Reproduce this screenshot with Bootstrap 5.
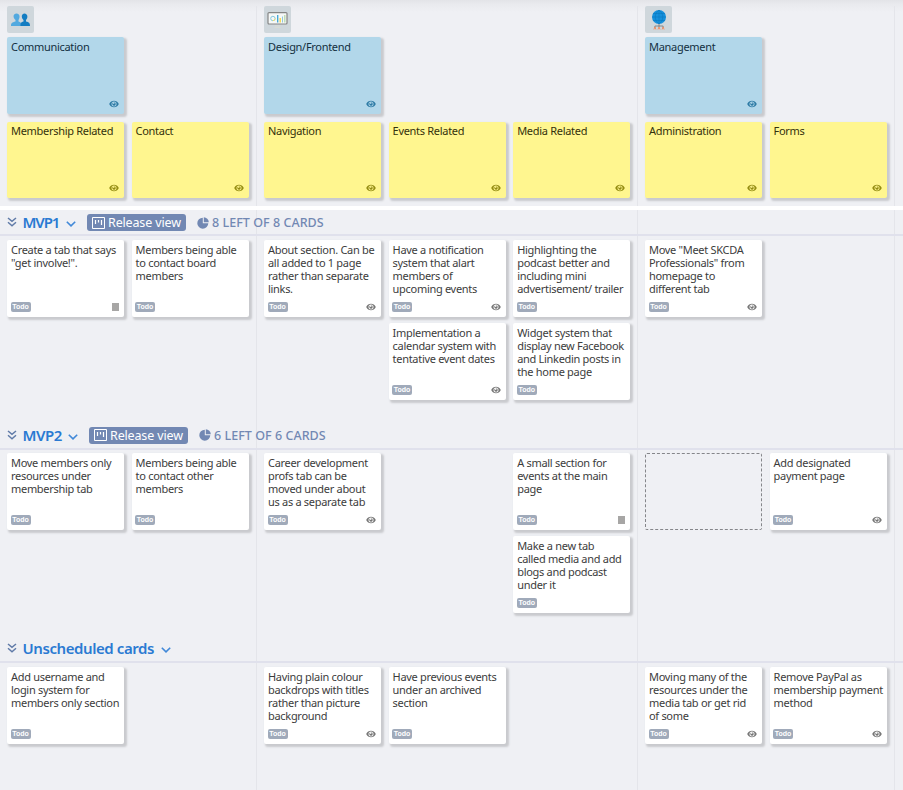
<!DOCTYPE html>
<html lang="en">
<head>
<meta charset="utf-8">
<meta name="viewport" content="width=device-width, initial-scale=1">
<title>Story map</title>
<link rel="stylesheet" href="https://cdn.jsdelivr.net/npm/bootstrap@5.3.0/dist/css/bootstrap.min.css">
<style>
body{background:#eff0f4;font-family:"Noto Sans",sans-serif;overflow:hidden}
.board{width:903px;height:790px;background:
 linear-gradient(#e4e5ea,#e4e5ea) 256px 6px/1px 100% no-repeat,
 linear-gradient(#e4e5ea,#e4e5ea) 637px 6px/1px 100% no-repeat,
 linear-gradient(#e4e5ea,#e4e5ea) 894px 6px/1px 100% no-repeat,
 linear-gradient(#e3e4e8 0,#e9eaee 4px,#eff0f4 12px) 0 0/100% 12px no-repeat}
.lane{padding-left:7px;display:grid;grid-auto-rows:77px;grid-auto-columns:117px;column-gap:7.6px;row-gap:6px;align-content:start}
.lane-2{width:257px;grid-template-columns:117px 117px}
.lane-3{width:381px;grid-template-columns:117px 117px 117px}
.map-head{height:206px;padding-top:6px}
.persona{width:27px;height:27px;background:#cfd7dc;border-radius:2px;margin-bottom:4px}
.persona-box{height:31px;padding-left:7px}
.goals{height:85px}
.steps .lane{grid-auto-rows:76px}
.divider{height:4px;background:#fff}
.note{background:#fff;border-radius:2px;box-shadow:2px 2px 2px 1px #c9cace;padding:3px 0 0 4px;font-size:11px;line-height:13px;color:#3c3c3c;white-space:pre;letter-spacing:-.3px}
.note.goal{background:#b2d7ea;color:#12303f;padding-top:2.5px}
.note.step{background:#fff68f;color:#34310c;padding-top:1.5px}
.note .meta{position:absolute;left:3.5px;right:4.8px;bottom:5px;height:10px}
.todo{width:20px;height:10px;border-radius:2px;background:#a0aaba;color:#fff;font:bold 7px/10px "Liberation Sans",sans-serif;letter-spacing:0;text-align:center}
.eye{width:10px;height:8px;color:#777}
.goal .eye{color:#2e7ba5}.step .eye{color:#958d13}
.desc{width:7px;height:8px;background:#a7a6a5}
.slot{border:1px dashed #85868a;border-radius:2px}
.rel-head{height:26px;padding-left:7px;border-bottom:2px solid #e0e1ec}
.rel-1{height:213px}.rel-2{height:214px}.rel-3{height:153px}
.rel-2 .rel-head{height:27px;padding-bottom:2px}
.rel-3 .rel-head{height:26px;padding-bottom:2px}
.rel-body{padding-top:4px}
.rel-2 .rel-body{padding-top:3px}
.rel-title{font-size:15px;font-weight:600;color:#2a7ad2;line-height:24px;margin-left:5.5px;white-space:nowrap}
.t-mvp1{width:36.500px;letter-spacing:-1.1px}
.t-mvp2{width:38.500px;letter-spacing:-.5px}
.t-unsch{width:131.500px;letter-spacing:-.42px}
.chev{margin:4px 0 0 7px}
.rel-btn{height:17px;width:99px;margin:1px 0 0 11px;border-radius:3px;background:#7288b3;color:#fff;font-size:12.5px;line-height:17px;padding:0 5px;letter-spacing:-.15px}
.btn-text{margin-left:3px;white-space:nowrap}
.pie{margin:1px 0 0 11px}
.left-count{margin:2px 0 0 3px;font-size:12.5px;font-weight:500;color:#7288b3;line-height:24px;letter-spacing:.04px;white-space:nowrap}
</style>
<script src="https://cdn.jsdelivr.net/npm/bootstrap@5.3.0/dist/js/bootstrap.bundle.min.js"></script>
</head>
<body>
<svg width="0" height="0" class="position-absolute">
 <symbol id="eye" viewBox="0 0 10 8"><path fill="currentColor" fill-rule="evenodd" d="M.2 4C1.2 1.900 3 .8 5 .8S8.800 1.900 9.800 4C8.800 6.100 7 7.200 5 7.200S1.200 6.100.2 4ZM2.500 4a2.500 2.500 0 0 0 5 0 2.500 2.500 0 0 0-5 0ZM3.300 4a1.700 1.700 0 0 1 .9-1.400V4H5.300V2.300A1.700 1.700 0 1 1 3.300 4Z"/></symbol>
 <symbol id="fold" viewBox="0 0 10 10"><path d="M1 1 5 4.300 9 1M1 5.300 5 8.700 9 5.300" fill="none" stroke="#607ba8" stroke-width="1.500"/></symbol>
 <symbol id="down" viewBox="0 0 10 6"><path d="M.8.8 5 4.900 9.200.8" fill="none" stroke="#4289d8" stroke-width="1.600"/></symbol>
 <symbol id="kanban" viewBox="0 0 13 12"><path d="M.5.500H12.500V11.500H.5Z" fill="none" stroke="#fff"/><path d="M3.500 3V7M6.500 3V5.500M9.500 3V8" stroke="#fff" stroke-width="1.200"/></symbol>
 <symbol id="pie" viewBox="0 0 12 12"><path fill="#7288b3" d="M5.800.7v5.500H11.300A5.500 5.500 0 1 1 5.800.7ZM6.800.2a5.200 5.200 0 0 1 5 5H6.800Z"/></symbol>
</svg>
<main class="board d-flex flex-column">
 <header class="map-head">
  <div class="d-flex">
   <div class="lane-2 persona-box"><div class="persona d-flex align-items-center justify-content-center"><svg width="21" height="15" viewBox="0 0 21 15"><path fill="#52a9df" d="M1 14c0-3 1-3.500 4.500-4.400V8C2.600 5.500 3 1.500 6.500 1.500S10.300 5.500 8.500 8v1.600c2 .5 3 1.200 3.500 4.400Z"/><path fill="#137dc2" d="M10.500 14c0-3 .5-3.700 3-4.400V8c-2.700-2.500-2-6.500 1-6.500s4 4 1.500 6.500v1.600c3 .7 4 1.400 4 4.400Z"/></svg></div></div>
   <div class="lane-3 persona-box"><div class="persona d-flex align-items-center justify-content-center"><svg width="21" height="17" viewBox="0 0 21 17"><rect x="1" y="1.600" width="19" height="11.400" rx="1" fill="#f6f8f7" stroke="#858585" stroke-width="1.200"/><circle cx="5.900" cy="7.500" r="2.200" fill="none" stroke="#85c8de"/><path d="M5.900 9.700A2.200 2.200 0 0 0 8.100 7.500" fill="none" stroke="#f0df70"/><path d="M10.700 4v7.500" stroke="#3ba4d5" stroke-width="1.300"/><path d="M13.200 7v4.500" stroke="#f5d43b" stroke-width="1.300"/><path d="M15.500 5.500v6" stroke="#93c9dc"/><path d="M17.800 4v7.500" stroke="#b4d6a6" stroke-width="1.200"/><path d="M8 15h5M7.500 16.500h6" stroke="#dbdcd4" stroke-width=".8"/></svg></div></div>
   <div class="persona-box"><div class="persona d-flex align-items-center justify-content-center"><svg width="16" height="21" viewBox="0 0 16 21"><circle cx="8" cy="8" r="7" fill="#1590dc"/><path d="M1 8h14M2 4.500h12M2 11.500h12M8 1v14M8 1c-5 4-5 10 0 14M8 1c5 4 5 10 0 14" fill="none" stroke="#0874b9" stroke-width=".5"/><path d="M8 15v3M3.900 19v-2h8.200v2" fill="none" stroke="#777" stroke-width=".8"/><path d="M2.900 20.500 3.900 18 4.900 20.500M7 20.500 8 18 9 20.500M11.100 20.500 12.100 18 13.100 20.500" fill="none" stroke="#f18a5c" stroke-width=".9"/></svg></div></div>
  </div>
  <div class="goals d-flex">
   <div class="lane lane-2"><div class="note goal position-relative">Communication<div class="meta d-flex align-items-center justify-content-end"><svg class="eye"><use href="#eye"/></svg></div></div></div>
   <div class="lane lane-3"><div class="note goal position-relative">Design/Frontend<div class="meta d-flex align-items-center justify-content-end"><svg class="eye"><use href="#eye"/></svg></div></div></div>
   <div class="lane lane-2"><div class="note goal position-relative">Management<div class="meta d-flex align-items-center justify-content-end"><svg class="eye"><use href="#eye"/></svg></div></div></div>
  </div>
  <div class="steps d-flex">
   <div class="lane lane-2"><div class="note step position-relative">Membership Related<div class="meta d-flex align-items-center justify-content-end"><svg class="eye"><use href="#eye"/></svg></div></div><div class="note step position-relative">Contact<div class="meta d-flex align-items-center justify-content-end"><svg class="eye"><use href="#eye"/></svg></div></div></div>
   <div class="lane lane-3"><div class="note step position-relative">Navigation<div class="meta d-flex align-items-center justify-content-end"><svg class="eye"><use href="#eye"/></svg></div></div><div class="note step position-relative">Events Related<div class="meta d-flex align-items-center justify-content-end"><svg class="eye"><use href="#eye"/></svg></div></div><div class="note step position-relative">Media Related<div class="meta d-flex align-items-center justify-content-end"><svg class="eye"><use href="#eye"/></svg></div></div></div>
   <div class="lane lane-2"><div class="note step position-relative">Administration<div class="meta d-flex align-items-center justify-content-end"><svg class="eye"><use href="#eye"/></svg></div></div><div class="note step position-relative">Forms<div class="meta d-flex align-items-center justify-content-end"><svg class="eye"><use href="#eye"/></svg></div></div></div>
  </div>
 </header>
 <div class="divider"></div>
 <section class="rel-1">
  <div class="rel-head d-flex align-items-center"><svg width="10" height="10"><use href="#fold"/></svg><span class="rel-title t-mvp1">MVP1</span><svg class="chev" width="10" height="6"><use href="#down"/></svg><span class="rel-btn d-flex align-items-center"><svg width="13" height="12"><use href="#kanban"/></svg><span class="btn-text">Release view</span></span><svg class="pie" width="12" height="12"><use href="#pie"/></svg><span class="left-count">8 LEFT OF 8 CARDS</span></div>
  <div class="rel-body d-flex">
   <div class="lane lane-2"><div class="note position-relative">Create a tab that says
"get involve!".<div class="meta d-flex align-items-center justify-content-between"><span class="todo">Todo</span><i class="desc"></i></div></div><div class="note position-relative">Members being able
to contact board
members<div class="meta d-flex align-items-center"><span class="todo">Todo</span></div></div></div>
   <div class="lane lane-3"><div class="note position-relative">About section. Can be
all added to 1 page
rather than separate
links.<div class="meta d-flex align-items-center justify-content-between"><span class="todo">Todo</span><svg class="eye"><use href="#eye"/></svg></div></div><div class="note position-relative">Have a notification
system that alart
members of
upcoming events<div class="meta d-flex align-items-center justify-content-between"><span class="todo">Todo</span><svg class="eye"><use href="#eye"/></svg></div></div><div class="note position-relative">Highlighting the
podcast better and
including mini
advertisement/ trailer<div class="meta d-flex align-items-center"><span class="todo">Todo</span></div></div><div></div><div class="note position-relative">Implementation a
calendar system with
tentative event dates<div class="meta d-flex align-items-center justify-content-between"><span class="todo">Todo</span><svg class="eye"><use href="#eye"/></svg></div></div><div class="note position-relative">Widget system that
display new Facebook
and Linkedin posts in
the home page<div class="meta d-flex align-items-center"><span class="todo">Todo</span></div></div></div>
   <div class="lane lane-2"><div class="note position-relative">Move "Meet SKCDA
Professionals" from
homepage to
different tab<div class="meta d-flex align-items-center justify-content-between"><span class="todo">Todo</span><svg class="eye"><use href="#eye"/></svg></div></div></div>
  </div>
 </section>
 <section class="rel-2">
  <div class="rel-head d-flex align-items-center"><svg width="10" height="10"><use href="#fold"/></svg><span class="rel-title t-mvp2">MVP2</span><svg class="chev" width="10" height="6"><use href="#down"/></svg><span class="rel-btn d-flex align-items-center"><svg width="13" height="12"><use href="#kanban"/></svg><span class="btn-text">Release view</span></span><svg class="pie" width="12" height="12"><use href="#pie"/></svg><span class="left-count">6 LEFT OF 6 CARDS</span></div>
  <div class="rel-body d-flex">
   <div class="lane lane-2"><div class="note position-relative">Move members only
resources under
membership tab<div class="meta d-flex align-items-center"><span class="todo">Todo</span></div></div><div class="note position-relative">Members being able
to contact other
members<div class="meta d-flex align-items-center"><span class="todo">Todo</span></div></div></div>
   <div class="lane lane-3"><div class="note position-relative">Career development
profs tab can be
moved under about
us as a separate tab<div class="meta d-flex align-items-center justify-content-between"><span class="todo">Todo</span><svg class="eye"><use href="#eye"/></svg></div></div><div></div><div class="note position-relative">A small section for
events at the main
page<div class="meta d-flex align-items-center justify-content-between"><span class="todo">Todo</span><i class="desc"></i></div></div><div></div><div></div><div class="note position-relative">Make a new tab
called media and add
blogs and podcast
under it<div class="meta d-flex align-items-center"><span class="todo">Todo</span></div></div></div>
   <div class="lane lane-2"><div class="slot"></div><div class="note position-relative">Add designated
payment page<div class="meta d-flex align-items-center justify-content-between"><span class="todo">Todo</span><svg class="eye"><use href="#eye"/></svg></div></div></div>
  </div>
 </section>
 <section class="rel-3">
  <div class="rel-head d-flex align-items-center"><svg width="10" height="10"><use href="#fold"/></svg><span class="rel-title t-unsch">Unscheduled cards</span><svg class="chev" width="10" height="6"><use href="#down"/></svg></div>
  <div class="rel-body d-flex">
   <div class="lane lane-2"><div class="note position-relative">Add username and
login system for
members only section<div class="meta d-flex align-items-center"><span class="todo">Todo</span></div></div></div>
   <div class="lane lane-3"><div class="note position-relative">Having plain colour
backdrops with titles
rather than picture
background<div class="meta d-flex align-items-center justify-content-between"><span class="todo">Todo</span><svg class="eye"><use href="#eye"/></svg></div></div><div class="note position-relative">Have previous events
under an archived
section<div class="meta d-flex align-items-center"><span class="todo">Todo</span></div></div></div>
   <div class="lane lane-2"><div class="note position-relative">Moving many of the
resources under the
media tab or get rid
of some<div class="meta d-flex align-items-center justify-content-between"><span class="todo">Todo</span><svg class="eye"><use href="#eye"/></svg></div></div><div class="note position-relative">Remove PayPal as
membership payment
method<div class="meta d-flex align-items-center justify-content-between"><span class="todo">Todo</span><svg class="eye"><use href="#eye"/></svg></div></div></div>
  </div>
 </section>
</main>
</body>
</html>
